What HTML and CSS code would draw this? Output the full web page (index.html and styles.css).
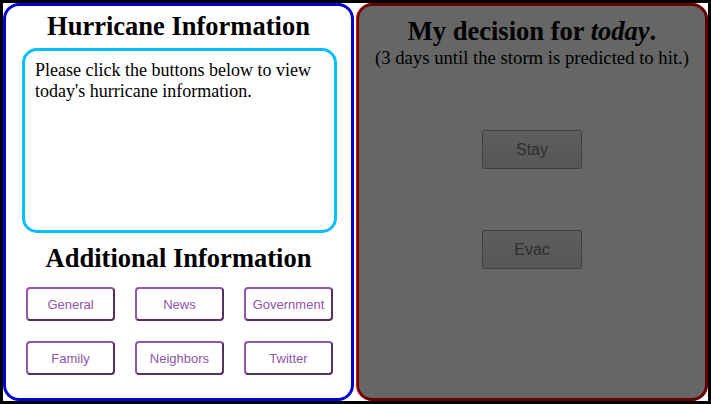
FILE: index.html
```html
<!DOCTYPE html>
<html>
<head>
<meta charset="utf-8">
<link rel="stylesheet" href="styles.css">
</head>
<body>
<div class="app">
  <section class="info-panel">
    <h1 class="title">Hurricane Information</h1>
    <div class="info-box">Please click the buttons below to view today's hurricane information.</div>
    <h2 class="title sub-title">Additional Information</h2>
    <div class="source-grid">
      <button class="source-btn">General</button>
      <button class="source-btn">News</button>
      <button class="source-btn">Government</button>
      <button class="source-btn">Family</button>
      <button class="source-btn">Neighbors</button>
      <button class="source-btn">Twitter</button>
    </div>
  </section>
  <section class="decision-panel">
    <h1 class="title decision-title">My decision for <em>today</em>.</h1>
    <p class="countdown">(3 days until the storm is predicted to hit.)</p>
    <div class="decision-buttons">
      <button class="decision-btn">Stay</button>
      <button class="decision-btn">Evac</button>
    </div>
    <div class="overlay"></div>
  </section>
</div>
</body>
</html>
```
FILE: styles.css
```css
html, body {
  margin: 0;
  padding: 0;
  background: #000;
}
* { box-sizing: border-box; }

.app {
  margin: 3px;
  width: 705px;
  height: 398px;
  background: #fff;
  display: flex;
  gap: 2px;
  font-family: "Liberation Serif", "Times New Roman", serif;
}

.info-panel {
  width: 351px;
  height: 398px;
  border: 3px solid #0000d0;
  border-radius: 16px;
  padding-top: 5px;
  background: #fff;
}

.title {
  margin: 0;
  font-size: 26.5px;
  font-weight: bold;
  text-align: center;
  color: #000;
  line-height: normal;
}

.info-box {
  margin: 6px 0 0 16px;
  width: 315px;
  height: 185px;
  border: 3px solid #00bfff;
  border-radius: 15px;
  padding: 9px 10px;
  font-size: 18px;
  line-height: normal;
  color: #000;
}

.sub-title {
  margin-top: 10px;
}

.source-grid {
  margin: 13px 0 0 20px;
  display: grid;
  grid-template-columns: repeat(3, 89px);
  grid-auto-rows: 34px;
  gap: 20px;
}

.source-btn {
  font-family: "Liberation Sans", Arial, sans-serif;
  font-size: 13px;
  color: #8e55a8;
  background: #fff;
  border: 2px solid;
  border-color: #9257ad #56305f #56305f #9257ad;
  border-radius: 4px;
  padding: 0;
}

.decision-panel {
  position: relative;
  width: 352px;
  height: 398px;
  border: 3px solid #ff0000;
  border-radius: 16px;
  background: #fff;
  padding-top: 10px;
  text-align: center;
}

.decision-title em {
  font-style: italic;
}

.countdown {
  margin: 0;
  font-size: 18.7px;
  line-height: normal;
}

.decision-buttons {
  margin-top: 61px;
  display: flex;
  flex-direction: column;
  align-items: center;
  gap: 61px;
}

.decision-btn {
  width: 100px;
  height: 39px;
  font-family: "Liberation Sans", Arial, sans-serif;
  font-size: 16px;
  color: #737373;
  background: linear-gradient(#ececec, #d6d6d6);
  border: 1px solid #a0a0a0;
  border-radius: 2px;
  padding: 0;
}

.overlay {
  position: absolute;
  top: -3px;
  right: -3px;
  bottom: -3px;
  left: -2px;
  border-radius: 16px;
  background: rgba(0, 0, 0, 0.6);
}
```
